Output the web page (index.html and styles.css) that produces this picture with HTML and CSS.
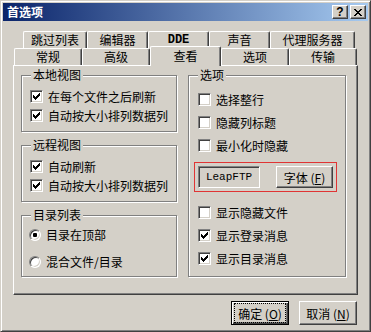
FILE: index.html
```html
<!DOCTYPE html>
<html lang="zh-CN">
<head>
  <meta charset="UTF-8" />
  <title>首选项</title>
  <link rel="stylesheet" href="styles.css">
</head>
<body>

  <div class="window">
    <!-- Title bar -->
    <div class="titlebar">
      <span class="title">首选项</span>
      <span class="tb-btn help">?</span>
      <span class="tb-btn">
        <svg width="8" height="7" viewBox="0 0 8 7" shape-rendering="crispEdges"><path d="M0 0h2v1h-2zM6 0h2v1h-2zM1 1h2v1h-2zM5 1h2v1h-2zM2 2h4v1h-4zM3 3h2v1h-2zM2 4h4v1h-4zM1 5h2v1h-2zM5 5h2v1h-2zM0 6h2v1h-2zM6 6h2v1h-2z" fill="#000"/></svg>
      </span>
    </div>

    <div class="content">
      <!-- Tabs -->
      <div class="tab-row back">
        <div class="tab w64">跳过列表</div>
        <div class="tab w61">编辑器</div>
        <div class="tab w61 mono">DDE</div>
        <div class="tab w61">声音</div>
        <div class="tab w85">代理服务器</div>
      </div>
      <div class="tab-row front">
        <div class="tab w68">常规</div>
        <div class="tab w68">高级</div>
        <div class="tab w71 selected">查看</div>
        <div class="tab w68">选项</div>
        <div class="tab w68">传输</div>
      </div>

      <!-- Tab page -->
      <div class="panel">
        <div class="col-left">
          <div class="group checks">
            <span class="group-title">本地视图</span>
            <label class="row"><span class="box"><svg class="tick" width="7" height="7"><path d="M6 0h1v1h-1zM5 1h2v1h-2zM0 2h1v1h-1zM4 2h3v1h-3zM0 3h2v1h-2zM3 3h3v1h-3zM0 4h5v1h-5zM1 5h3v1h-3zM2 6h1v1h-1z"/></svg></span>在每个文件之后刷新</label>
            <label class="row"><span class="box"><svg class="tick" width="7" height="7"><path d="M6 0h1v1h-1zM5 1h2v1h-2zM0 2h1v1h-1zM4 2h3v1h-3zM0 3h2v1h-2zM3 3h3v1h-3zM0 4h5v1h-5zM1 5h3v1h-3zM2 6h1v1h-1z"/></svg></span>自动按大小排列数据列</label>
          </div>
          <div class="group checks">
            <span class="group-title">远程视图</span>
            <label class="row"><span class="box"><svg class="tick" width="7" height="7"><path d="M6 0h1v1h-1zM5 1h2v1h-2zM0 2h1v1h-1zM4 2h3v1h-3zM0 3h2v1h-2zM3 3h3v1h-3zM0 4h5v1h-5zM1 5h3v1h-3zM2 6h1v1h-1z"/></svg></span>自动刷新</label>
            <label class="row"><span class="box"><svg class="tick" width="7" height="7"><path d="M6 0h1v1h-1zM5 1h2v1h-2zM0 2h1v1h-1zM4 2h3v1h-3zM0 3h2v1h-2zM3 3h3v1h-3zM0 4h5v1h-5zM1 5h3v1h-3zM2 6h1v1h-1z"/></svg></span>自动按大小排列数据列</label>
          </div>
          <div class="group radios">
            <span class="group-title">目录列表</span>
            <label class="row radio-row"><span class="radio on"></span>目录在顶部</label>
            <label class="row radio-row"><span class="radio"></span>混合文件/目录</label>
          </div>
        </div>

        <div class="group options">
          <span class="group-title">选项</span>
          <label class="row opt"><span class="box"></span>选择整行</label>
          <label class="row opt"><span class="box"></span>隐藏列标题</label>
          <label class="row opt"><span class="box"></span>最小化时隐藏</label>

          <div class="font-box">
            <span class="sample">LeapFTP</span>
            <span class="btn small">字体 (<u>F</u>)</span>
          </div>

          <label class="row opt"><span class="box"></span>显示隐藏文件</label>
          <label class="row opt"><span class="box"><svg class="tick" width="7" height="7"><path d="M6 0h1v1h-1zM5 1h2v1h-2zM0 2h1v1h-1zM4 2h3v1h-3zM0 3h2v1h-2zM3 3h3v1h-3zM0 4h5v1h-5zM1 5h3v1h-3zM2 6h1v1h-1z"/></svg></span>显示登录消息</label>
          <label class="row opt"><span class="box"><svg class="tick" width="7" height="7"><path d="M6 0h1v1h-1zM5 1h2v1h-2zM0 2h1v1h-1zM4 2h3v1h-3zM0 3h2v1h-2zM3 3h3v1h-3zM0 4h5v1h-5zM1 5h3v1h-3zM2 6h1v1h-1z"/></svg></span>显示目录消息</label>
        </div>
      </div>

      <!-- Dialog buttons -->
      <div class="actions">
        <span class="btn default"><span class="focus">确定 (<u>O</u>)</span></span>
        <span class="btn">取消 (<u>N</u>)</span>
      </div>
    </div>
  </div>

</body>
</html>
```

FILE: styles.css
```css
* {
  box-sizing: border-box;
}

body {
  margin: 0;
  background: #d4d0c8;
  color: #000;
  font-family: "Noto Sans CJK SC", "Liberation Sans", sans-serif;
  font-size: 12px;
}

.window {
  width: 371px;
  height: 332px;
  padding: 2px;
  background: #d4d0c8;
  border: 1px solid;
  border-color: #d4d0c8 #404040 #404040 #d4d0c8;
  box-shadow: inset 1px 1px #fff, inset -1px -1px #808080;
}

/* title bar */
.titlebar {
  display: flex;
  align-items: center;
  gap: 2px;
  height: 18px;
  padding: 0 2px;
  background: linear-gradient(to right, #0a246a, #a6caf0);
}

.title {
  margin-right: auto;
  padding-left: 2px;
  color: #fff;
  font-weight: bold;
  line-height: 14px;
}

.tb-btn {
  display: flex;
  align-items: center;
  justify-content: center;
  width: 16px;
  height: 14px;
  background: #d4d0c8;
  border: 1px solid;
  border-color: #fff #404040 #404040 #fff;
  box-shadow: inset -1px -1px #808080;
}

.tb-btn.help {
  font-family: "Liberation Sans", sans-serif;
  font-weight: bold;
  font-size: 12px;
  line-height: 12px;
}

.content {
  padding: 0 10px;
}

/* tabs */
.tab-row {
  display: flex;
  height: 17px;
}

.tab-row.back {
  margin-top: 10px;
  padding-left: 10px;
}

.tab-row.front {
  padding-left: 1px;
}

.tab {
  height: 17px;
  background: #d4d0c8;
  border-top: 1px solid #fff;
  border-left: 1px solid #fff;
  border-right: 1px solid #404040;
  border-radius: 2px 2px 0 0;
  box-shadow: inset -1px 0 #808080;
  text-align: center;
  line-height: 16px;
}

.tab.selected {
  position: relative;
  z-index: 1;
  height: 20px;
  margin-top: -2px;
  padding-top: 1px;
}

.w61 { width: 61px; }
.w64 { width: 64px; }
.w68 { width: 68px; }
.w71 { width: 71px; }
.w85 { width: 85px; }

.mono {
  font-family: "Liberation Mono", monospace;
  font-weight: bold;
  font-size: 12px;
}

/* tab page */
.panel {
  display: flex;
  align-items: flex-start;
  gap: 11px;
  height: 230px;
  padding: 9px 11px 0 7px;
  border: 1px solid;
  border-color: #fff #404040 #404040 #fff;
  box-shadow: inset -1px -1px #808080;
}

.col-left {
  display: flex;
  flex-direction: column;
  gap: 13px;
  width: 156px;
}

.group {
  position: relative;
  border: 1px solid #808080;
  box-shadow: 1px 1px #fff, inset 1px 1px #fff;
}

.group-title {
  position: absolute;
  top: -8px;
  left: 9px;
  padding: 0 2px;
  background: #d4d0c8;
  line-height: 14px;
}

.group.checks {
  padding: 11px 0 6px 8px;
}

.group.radios {
  padding: 5px 0 1px 7px;
}

.group.options {
  width: 158px;
  height: 202px;
  padding: 12px 0 0 9px;
}

.row {
  display: flex;
  align-items: center;
  gap: 5px;
  height: 19px;
  white-space: nowrap;
}

.row.radio-row {
  height: 27px;
}

.row.opt {
  height: 23px;
}

.box {
  display: flex;
  align-items: center;
  justify-content: center;
  width: 13px;
  height: 13px;
  flex: none;
  background: #fff;
  border: 1px solid;
  border-color: #808080 #fff #fff #808080;
  box-shadow: inset 1px 1px #404040, inset -1px -1px #d4d0c8;
}

.tick {
  display: block;
  shape-rendering: crispEdges;
  fill: #000;
}

.radio {
  display: flex;
  align-items: center;
  justify-content: center;
  width: 12px;
  height: 12px;
  flex: none;
  background: #fff;
  border-radius: 50%;
  border: 1px solid;
  border-color: #808080 #fff #fff #808080;
  box-shadow: inset 1px 1px #404040, inset -1px -1px #d4d0c8;
}

.radio.on::after {
  content: "";
  width: 4px;
  height: 4px;
  border-radius: 1px;
  background: #000;
}

/* font sample + font button */
.font-box {
  display: flex;
  align-items: center;
  gap: 16px;
  width: 143px;
  height: 30px;
  margin: 5px 0 9px -4px;
  padding-left: 3px;
  border: 1px solid #e03434;
}

.sample {
  display: flex;
  align-items: center;
  justify-content: center;
  width: 62px;
  height: 22px;
  font-family: "Liberation Mono", monospace;
  font-size: 11px;
  border: 1px solid;
  border-color: #808080 #fff #fff #808080;
  box-shadow: inset 1px 1px #404040;
}

.btn {
  display: flex;
  align-items: center;
  justify-content: center;
  width: 58px;
  height: 24px;
  background: #d4d0c8;
  border: 1px solid;
  border-color: #fff #404040 #404040 #fff;
  box-shadow: inset -1px -1px #808080;
  white-space: nowrap;
}

.btn.small {
  width: 57px;
  height: 22px;
}

.btn.default {
  border: 1px solid #000;
  box-shadow: inset 1px 1px #fff, inset -1px -1px #404040, inset -2px -2px #808080;
}

.focus {
  display: flex;
  align-items: center;
  justify-content: center;
  width: 50px;
  height: 18px;
  outline: 1px dotted #000;
}

.actions {
  display: flex;
  justify-content: flex-end;
  gap: 10px;
  margin-top: 6px;
  padding-right: 1px;
}
```
